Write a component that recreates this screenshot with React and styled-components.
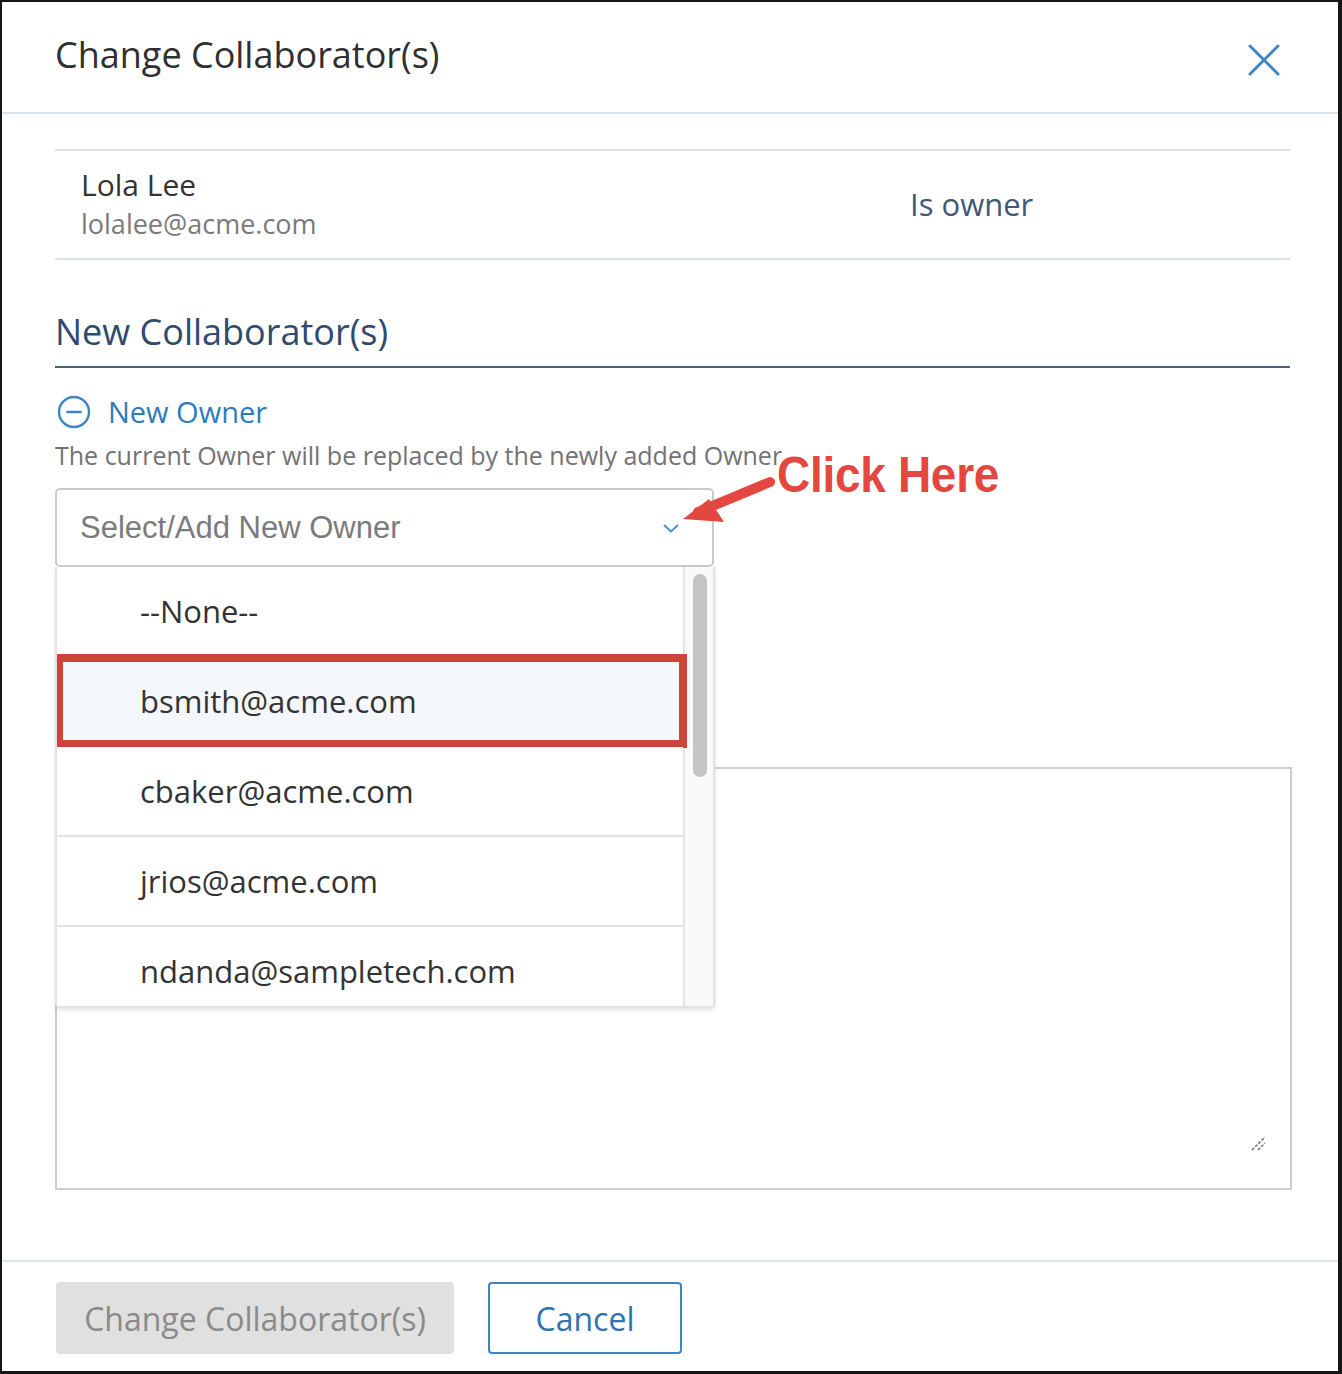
import styled, { createGlobalStyle } from 'styled-components';

const GlobalStyle = createGlobalStyle`
  * { box-sizing: border-box; }
  body {
    margin: 0;
    font-family: 'Open Sans', 'Noto Sans', sans-serif;
    background: #fff;
  }
`;

const owners = [
  { id: 'none', label: '--None--' },
  { id: 'bsmith', label: 'bsmith@acme.com', marked: true },
  { id: 'cbaker', label: 'cbaker@acme.com' },
  { id: 'jrios', label: 'jrios@acme.com' },
  { id: 'ndanda', label: 'ndanda@sampletech.com' },
];

const App = () => {
  return (
    <>
      <GlobalStyle />
      <Modal>
        <Header>
          <Title>Change Collaborator(s)</Title>
          <CloseButton type="button" aria-label="Close">
            <svg width="32" height="32" viewBox="0 0 32 32">
              <path d="M2 2 L30 30 M30 2 L2 30" stroke="#3d86c6" strokeWidth="3" strokeLinecap="round" />
            </svg>
          </CloseButton>
        </Header>

        <Body>
          <OwnerRow>
            <div>
              <OwnerName>Lola Lee</OwnerName>
              <OwnerEmail>lolalee@acme.com</OwnerEmail>
            </div>
            <OwnerRole>Is owner</OwnerRole>
          </OwnerRow>

          <SectionTitle>New Collaborator(s)</SectionTitle>

          <ToggleRow>
            <svg width="34" height="34" viewBox="0 0 34 34">
              <circle cx="17" cy="17" r="15" fill="none" stroke="#3a85c4" strokeWidth="2.4" />
              <path d="M10.5 17 H23.5" stroke="#3a85c4" strokeWidth="2.6" strokeLinecap="round" />
            </svg>
            <ToggleLabel>New Owner</ToggleLabel>
          </ToggleRow>
          <HelpText>The current Owner will be replaced by the newly added Owner</HelpText>

          <Field>
            <Select>
              <Placeholder>Select/Add New Owner</Placeholder>
              <svg width="18" height="12" viewBox="0 0 18 12">
                <path d="M2 3 L9 9.5 L16 3" fill="none" stroke="#4f8fc8" strokeWidth="2" />
              </svg>
            </Select>

            <Listbox>
              <Options>
                {owners.map((owner) => (
                  <Option key={owner.id} marked={owner.marked}>
                    {owner.label}
                  </Option>
                ))}
              </Options>
              <Scrollbar>
                <Thumb />
              </Scrollbar>
            </Listbox>

            <Callout>
              <svg width="150" height="70" viewBox="0 0 150 70">
                <path d="M130 13 L58 43" stroke="#e4473f" strokeWidth="10" strokeLinecap="round" />
                <path d="M43 50 L69 30 L84 53 Z" fill="#e4473f" />
              </svg>
              <CalloutText>Click Here</CalloutText>
            </Callout>
          </Field>

          <MessageBox>
            <Message />
            <ResizeGrip width="18" height="18" viewBox="0 0 18 18">
              <path d="M2 16 L15 3 M8 16 L15 9" stroke="#6f6f6f" strokeWidth="1.5" strokeDasharray="3 1.5" />
            </ResizeGrip>
          </MessageBox>
        </Body>

        <Footer>
          <PrimaryButton type="button" disabled>
            Change Collaborator(s)
          </PrimaryButton>
          <OutlineButton type="button">Cancel</OutlineButton>
        </Footer>
      </Modal>
    </>
  );
};

const Modal = styled.div`
  display: flex;
  flex-direction: column;
  width: 1342px;
  height: 1374px;
  border: 2px solid #161616;
  border-right-width: 4px;
  border-bottom-width: 3px;
  background: #fff;
`;

const Header = styled.header`
  display: flex;
  align-items: center;
  justify-content: space-between;
  height: 112px;
  padding: 0 58px 0 53px;
  border-bottom: 2px solid #dde2e7;
`;

const Title = styled.h1`
  margin: 0 0 4px;
  font-size: 36px;
  line-height: 48px;
  font-weight: 400;
  color: #2f2f2f;
`;

const CloseButton = styled.button`
  display: flex;
  padding: 0;
  border: 0;
  background: none;
  margin-top: 6px;
`;

const Body = styled.main`
  flex: 1;
  display: flex;
  flex-direction: column;
  padding: 35px 48px 0 53px;
`;

const OwnerRow = styled.div`
  display: grid;
  grid-template-columns: 829px 1fr;
  align-items: center;
  height: 111px;
  padding: 0 0 0 26px;
  border-top: 2px solid #dce1e6;
  border-bottom: 2px solid #dce1e6;
`;

const OwnerName = styled.div`
  font-size: 30px;
  line-height: 38px;
  color: #333;
`;

const OwnerEmail = styled.div`
  font-size: 27px;
  line-height: 40px;
  color: #7a7a7a;
`;

const OwnerRole = styled.div`
  font-size: 31px;
  color: #3e5878;
  padding-bottom: 2px;
`;

const SectionTitle = styled.h2`
  margin: 49px 0 0;
  padding-bottom: 11px;
  font-size: 36px;
  line-height: 46px;
  font-weight: 400;
  color: #2e4a6c;
  border-bottom: 2px solid #4b617f;
`;

const ToggleRow = styled.div`
  display: flex;
  align-items: center;
  gap: 17px;
  margin-top: 26px;
  padding-left: 2px;
`;

const ToggleLabel = styled.span`
  font-size: 29px;
  line-height: 36px;
  color: #2d7bbd;
`;

const HelpText = styled.p`
  margin: 10px 0 0;
  font-size: 25px;
  line-height: 30px;
  color: #727272;
`;

const Field = styled.div`
  position: relative;
  width: 659px;
  margin-top: 18px;
`;

const Select = styled.div`
  display: flex;
  align-items: center;
  justify-content: space-between;
  height: 79px;
  padding: 0 32px 0 23px;
  border: 2px solid #cbcbcb;
  border-radius: 5px;
`;

const Placeholder = styled.span`
  font-family: 'Liberation Sans', Arial, sans-serif;
  font-size: 31px;
  color: #7b7b7b;
`;

const Listbox = styled.div`
  position: absolute;
  top: 79px;
  left: 0;
  z-index: 2;
  display: flex;
  width: 660px;
  height: 441px;
  overflow: hidden;
  background: #fff;
  border: 2px solid #e2e2e2;
  border-top: 0;
  border-radius: 0 0 4px 4px;
  box-shadow: 0 2px 4px rgba(0, 0, 0, 0.12);
`;

const Options = styled.ul`
  flex: 1;
  margin: 0;
  padding: 0;
  list-style: none;
`;

const Option = styled.li`
  position: relative;
  display: flex;
  align-items: center;
  height: 90px;
  padding-left: 83px;
  font-size: 31px;
  color: #333;
  border-bottom: 2px solid #e2e2e2;
  background: ${(props) => (props.marked ? '#f4f7fb' : '#fff')};

  &::after {
    content: '';
    display: ${(props) => (props.marked ? 'block' : 'none')};
    position: absolute;
    inset: -3px -4px -3px -2px;
    border: 8px solid #cf433a;
  }
`;

const Scrollbar = styled.div`
  width: 30px;
  padding: 7px 6px 0 8px;
  background: #fafafa;
  border-left: 2px solid #e4e4e4;
`;

const Thumb = styled.div`
  height: 203px;
  border-radius: 8px;
  background: #c4c4c4;
`;

const Callout = styled.div`
  position: absolute;
  left: 585px;
  top: -19px;
  z-index: 3;
  display: flex;
  align-items: flex-start;
  white-space: nowrap;
`;

const CalloutText = styled.span`
  margin: -20px 0 0 -13px;
  font-family: 'Liberation Sans', Arial, sans-serif;
  font-weight: 700;
  font-size: 46px;
  line-height: 53px;
  color: #e4473f;
  transform: scaleY(1.08);
  letter-spacing: -0.3px;
`;

const MessageBox = styled.div`
  position: relative;
  width: 1237px;
  margin-top: 200px;
`;

const Message = styled.textarea`
  display: block;
  width: 100%;
  height: 423px;
  border: 2px solid #cccccc;
  resize: none;
  font-family: 'Open Sans', sans-serif;
`;

const ResizeGrip = styled.svg`
  position: absolute;
  right: 24px;
  bottom: 38px;
`;

const Footer = styled.footer`
  display: flex;
  gap: 34px;
  height: 111px;
  padding: 20px 0 0 54px;
  border-top: 2px solid #e0e5ea;
`;

const PrimaryButton = styled.button`
  width: 398px;
  height: 72px;
  border: 0;
  border-radius: 4px;
  background: #e0e0e0;
  font-family: 'Open Sans', sans-serif;
  font-size: 32px;
  color: #8a8a8a;
`;

const OutlineButton = styled.button`
  width: 194px;
  height: 72px;
  border: 2px solid #3f83c2;
  border-radius: 4px;
  background: #fff;
  font-family: 'Open Sans', sans-serif;
  font-size: 32px;
  color: #2e72b3;
`;

export default App;
